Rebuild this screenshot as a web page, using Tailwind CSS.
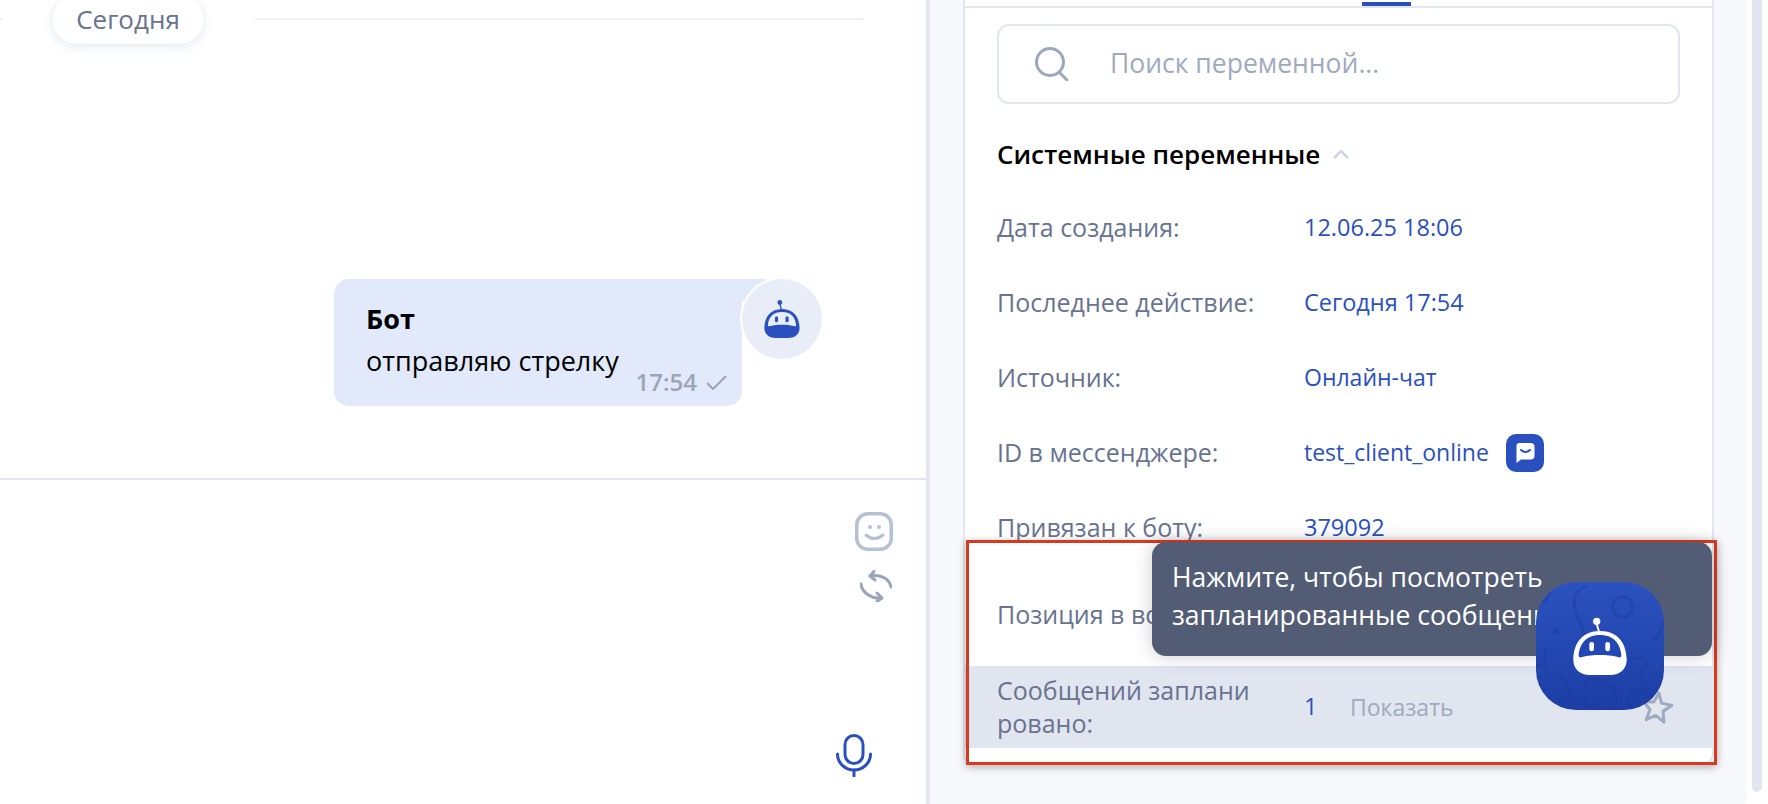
<!DOCTYPE html>
<html lang="ru">
<head>
  <meta charset="UTF-8">
  <meta name="viewport" content="width=device-width, initial-scale=1.0">
  <title>Чат</title>
  <script src="https://cdn.jsdelivr.net/npm/@tailwindcss/browser@4"></script>
</head>
<body class="bg-white font-['Open_Sans',sans-serif] antialiased">
  <div class="flex h-[804px] w-full overflow-hidden bg-white">

    <!-- Chat column -->
    <div class="flex w-[926px] shrink-0 flex-col">
      <div class="h-[478px] shrink-0">
        <div class="-mt-[7px] flex items-center">
          <div class="h-[2px] w-[2px] bg-[#eef0f6]"></div>
          <div class="ml-[49px] flex h-[52px] w-[154px] items-center justify-center rounded-full border border-[#eef0f6] bg-white text-[26px] font-medium text-[#68738f] shadow-[0_4px_10px_rgba(40,60,120,0.08)]">Сегодня</div>
          <div class="ml-[50px] h-[2px] w-[608px] bg-[#eef0f6]"></div>
        </div>

        <div class="mt-[234px] flex justify-end pr-[104px]">
          <div class="relative h-[127px] w-[408px] rounded-l-[15px] rounded-br-[15px] bg-[#e1e9fb] pl-[32px] pt-[21px]">
            <div class="absolute left-full top-0 h-[22px] w-[24px] bg-[#e1e9fb]"></div>
            <p class="text-[27px] font-bold leading-[38px] text-black">Бот</p>
            <p class="mt-[4px] text-[27px] leading-[38px] text-black">отправляю стрелку</p>
            <div class="absolute bottom-[9px] right-[15px] flex items-center gap-[9px]">
              <span class="text-[24px] leading-[30px] font-semibold text-[#9aa5b8]">17:54</span>
              <svg class="h-[15px] w-[21px]" viewBox="0 0 21 15" fill="none" stroke="#9aa5b8" stroke-width="2"><path d="M1 8l6 6L20 1"/></svg>
            </div>
          </div>
          <div class="relative z-10 flex h-[80px] w-[80px] items-center justify-center rounded-full bg-[#e9edf8] shadow-[0_0_0_2px_#fff]">
            <svg class="h-[38px] w-[36px]" viewBox="218 172 164 172">
              <path fill="#2a50c0" d="M300 212C245 212 222 250 220 295C218 325 240 344 270 344H330C360 344 382 325 380 295C378 250 355 212 300 212Z"/>
              <path fill="#e9edf8" d="M300 226C255 226 238 255 236 285C236 292 240 292 246 290C280 282 320 282 354 290C360 292 364 292 364 285C362 255 345 226 300 226Z"/>
              <rect x="268" y="245" width="14" height="28" rx="7" fill="#2a50c0"/>
              <rect x="316" y="245" width="14" height="28" rx="7" fill="#2a50c0"/>
              <circle cx="290" cy="183" r="11" fill="#2a50c0"/>
              <path d="M290 190L297 214" stroke="#2a50c0" stroke-width="6"/>
            </svg>
          </div>
        </div>
      </div>

      <div class="h-[2px] shrink-0 bg-[#e2e6f0]"></div>

      <!-- Composer icons -->
      <div class="flex flex-1 flex-col items-end pt-[32px]">
        <svg class="mr-[33px] h-[39px] w-[38px]" viewBox="0 0 38 39" fill="none" stroke="#b6c1d4" stroke-width="3.500">
          <rect x="1.750" y="1.750" width="34.500" height="35.500" rx="11"/>
          <circle cx="15" cy="15" r="2" fill="#b6c1d4" stroke="none"/>
          <circle cx="24" cy="15" r="2" fill="#b6c1d4" stroke="none"/>
          <path d="M11 23Q19 30 28 23" stroke-width="3" stroke-linecap="round"/>
        </svg>
        <svg class="mr-[34px] mt-[19px] h-[32px] w-[32px]" viewBox="0 0 32 32" fill="none" stroke="#9aa5b8" stroke-width="3" stroke-linecap="round" stroke-linejoin="round">
          <path d="M10 6C20 4 29 8 31 17"/>
          <path d="M14 1.500L10 6L15 10"/>
          <path d="M1 14C2 23 12 29 21 28"/>
          <path d="M17 23L22 28L17 31.500"/>
        </svg>
        <svg class="mr-[54px] mt-[132px] h-[43px] w-[36px]" viewBox="0 0 36 43" fill="none" stroke="#2a50c0" stroke-width="3" stroke-linecap="round">
          <rect x="9" y="1.500" width="18" height="28" rx="9"/>
          <path d="M1.500 20C1.500 29 9 36 18 36C27 36 34.500 29 34.500 20"/>
          <path d="M18 36V42"/>
        </svg>
      </div>
    </div>

    <div class="w-[4px] shrink-0 bg-[#e2e6f0]"></div>

    <!-- Variables column -->
    <div class="w-[816px] shrink-0 bg-[#f7f8fb] pl-[33px]">
      <div class="relative h-[764px] w-[751px] rounded-b-[10px] border-x-2 border-b-2 border-[#e2e6f0] bg-white">
        <div class="relative h-[8px] border-b-2 border-[#e2e6f0]">
          <div class="absolute left-[397px] top-[2px] h-[4px] w-[49px] bg-[#2a50c0]"></div>
        </div>

        <div class="px-[32px] pt-[16px]">
          <div class="flex h-[80px] w-[683px] items-center rounded-[12px] border-2 border-[#e2e6f0] pl-[36px]">
            <svg class="h-[34px] w-[34px] shrink-0" viewBox="0 0 34 34" fill="none" stroke="#9aa7bd" stroke-width="3" stroke-linecap="round">
              <circle cx="15" cy="15" r="13.500"/>
              <path d="M25 26L32 33"/>
            </svg>
            <span class="ml-[41px] text-[26.500px] text-[#a0aabf]">Поиск переменной...</span>
          </div>

          <div class="mt-[30px] flex h-[40px] items-center">
            <span class="text-[26px] font-semibold text-black">Системные переменные</span>
            <svg class="ml-[13px] h-[9px] w-[16px]" viewBox="0 0 16 9" fill="none" stroke="#cdd4e2" stroke-width="2.500"><path d="M1 8l7-7 7 7"/></svg>
          </div>
        </div>

        <div class="pl-[32px] pt-[16px] text-[25px]">
          <div class="grid h-[75px] grid-cols-[307px_1fr] items-center">
            <span class="text-[#68738f]">Дата создания:</span>
            <span class="text-[23.500px] text-[#2a50c0]">12.06.25 18:06</span>
          </div>
          <div class="grid h-[75px] grid-cols-[307px_1fr] items-center">
            <span class="text-[#68738f]">Последнее действие:</span>
            <span class="text-[23.500px] text-[#2a50c0]">Сегодня 17:54</span>
          </div>
          <div class="grid h-[75px] grid-cols-[307px_1fr] items-center">
            <span class="text-[#68738f]">Источник:</span>
            <span class="text-[23px] text-[#2a50c0]">Онлайн-чат</span>
          </div>
          <div class="grid h-[75px] grid-cols-[307px_1fr] items-center">
            <span class="text-[#68738f]">ID в мессенджере:</span>
            <span class="flex items-center gap-[17px] text-[23px] text-[#2a50c0]">test_client_online
              <span class="flex h-[38px] w-[38px] items-center justify-center rounded-[10px] bg-[#2a50c0]">
                <svg class="h-[22px] w-[20px]" viewBox="0 0 20 22">
                  <path fill="#fff" d="M4 1H16C18 1 19.500 2.500 19.500 4.500V14C19.500 16 18 17.500 16 17.500H6L1.500 21V4.500C1.500 2.500 2 1 4 1Z"/>
                  <path fill="none" stroke="#2a50c0" stroke-width="2" stroke-linecap="round" d="M6 8Q10.500 12 15 8"/>
                </svg>
              </span>
            </span>
          </div>
          <div class="grid h-[75px] grid-cols-[307px_1fr] items-center">
            <span class="text-[#68738f]">Привязан к боту:</span>
            <span class="text-[23.500px] text-[#2a50c0]">379092</span>
          </div>
        </div>

        <div class="relative -mt-[23px] flex h-[124px] items-end bg-white pb-[33px] pl-[32px] text-[25px] text-[#68738f]">Позиция в воронке:</div>

        <div class="grid h-[82px] grid-cols-[307px_46px_1fr_auto] items-center bg-[#e1e5ef] pl-[32px] pr-[38px]">
          <span class="text-[25px] leading-[33px] text-[#68738f]">Сообщений заплани<br>ровано:</span>
          <span class="text-[23.500px] text-[#2a50c0]">1</span>
          <span class="text-[23px] text-[#a0aabf]">Показать</span>
          <svg class="h-[34px] w-[34px] rotate-[8deg]" viewBox="0 0 34 34" fill="none" stroke="#a0aabf" stroke-width="3" stroke-linejoin="round">
            <path d="M17 3L21 12.500L31.500 13.500L23.500 20.500L26 31L17 25.500L8 31L10.500 20.500L2.500 13.500L13 12.500Z"/>
          </svg>
        </div>

        <!-- Onboarding highlight, tooltip and assistant button lie over the rows -->
        <div class="pointer-events-none absolute left-px top-[540px] h-[225px] w-[751px] border-[3px] border-[#d83a1f] shadow-[0_2px_8px_rgba(0,0,0,0.3)]"></div>
        <div class="absolute left-[187px] top-[542px] h-[114px] w-[560px] rounded-[14px] bg-[#525d75] pl-[20px] pt-[17px] text-[26.500px] leading-[37.500px] text-white shadow-[0_0_20px_rgba(0,0,0,0.2)]">Нажмите, чтобы посмотреть<br>запланированные сообщения</div>
        <div class="absolute left-[571px] top-[582px] h-[128px] w-[128px] overflow-hidden rounded-[40px] bg-gradient-to-b from-[#2c52bf] to-[#1c3ea5]">
          <svg class="h-full w-full" viewBox="108 65 384 384" fill="none">
            <g stroke="#1b3aa0" stroke-opacity="0.4" stroke-width="9" stroke-linecap="round">
              <path d="M258 78C215 95 215 130 235 175C250 210 262 232 240 262"/>
              <circle cx="368" cy="140" r="30"/>
              <path d="M108 130C145 130 155 100 145 80"/>
              <path d="M135 270V315H108"/>
              <path d="M490 190C482 215 472 230 462 238"/>
              <path d="M390 295C420 290 445 295 440 315L420 345"/>
              <path d="M185 345C205 380 222 420 240 445"/>
              <path d="M262 360C295 345 340 380 350 410C355 440 320 450 280 449C250 430 245 385 262 360Z"/>
              <circle cx="420" cy="420" r="36"/>
            </g>
            <circle cx="170" cy="213" r="8" fill="#1b3aa0" fill-opacity="0.5"/>
            <path fill="#fff" d="M300 212C245 212 222 250 220 295C218 325 240 344 270 344H330C360 344 382 325 380 295C378 250 355 212 300 212Z"/>
            <path fill="#2247b4" d="M300 224C255 224 238 255 236 285C236 292 240 292 246 290C280 282 320 282 354 290C360 292 364 292 364 285C362 255 345 224 300 224Z"/>
            <rect x="268" y="245" width="14" height="28" rx="7" fill="#fff"/>
            <rect x="316" y="245" width="14" height="28" rx="7" fill="#fff"/>
            <circle cx="290" cy="183" r="11" fill="#fff"/>
            <path d="M290 190L297 214" stroke="#fff" stroke-width="6"/>
          </svg>
        </div>
      </div>
    </div>

    <!-- Page scrollbar -->
    <div class="w-[22px] shrink-0 pl-[6px]">
      <div class="h-[792px] w-[10px] rounded-b-[5px] bg-[#e2e6f0]"></div>
    </div>
  </div>
</body>
</html>
